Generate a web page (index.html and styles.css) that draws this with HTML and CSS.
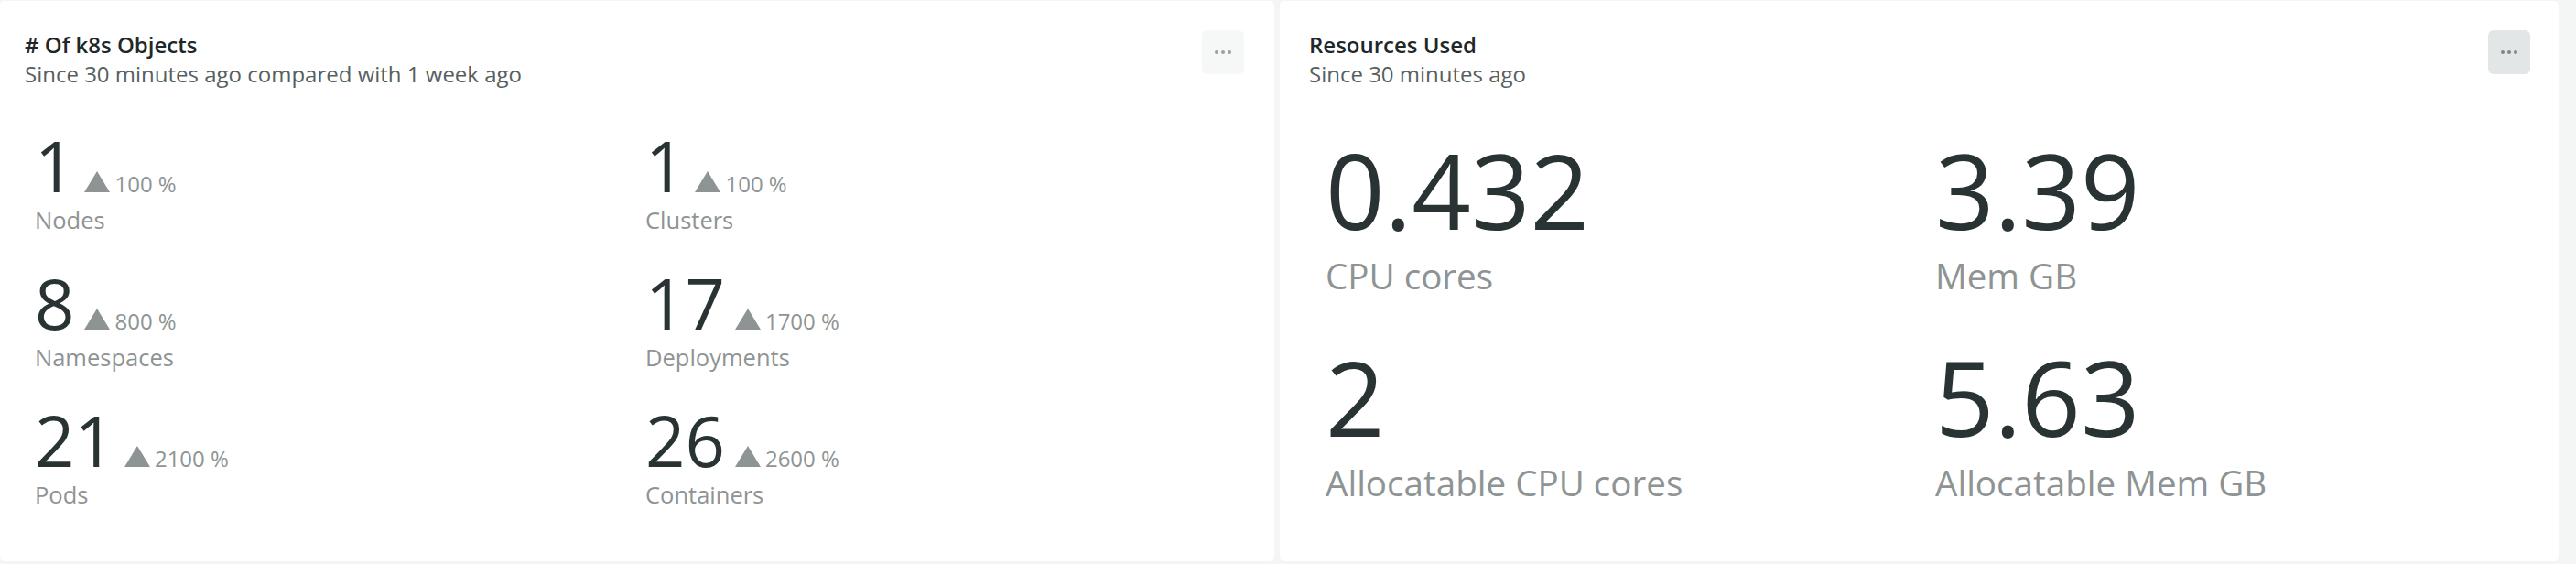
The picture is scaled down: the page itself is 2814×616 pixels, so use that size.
FILE: index.html
```html
<!DOCTYPE html>
<html lang="en">
<head>
<meta charset="utf-8">
<title>Kubernetes overview</title>
<link rel="stylesheet" href="styles.css">
</head>
<body>
<div class="dashboard">
  <section class="card card-objects">
    <header class="card-header">
      <div class="heading">
        <h2 class="title"># Of k8s Objects</h2>
        <p class="subtitle">Since 30 minutes ago compared with 1 week ago</p>
      </div>
      <button class="menu-btn" type="button" aria-label="More">
        <svg width="20" height="6" viewBox="0 0 20 6"><circle cx="3" cy="3" r="2"/><circle cx="10" cy="3" r="2"/><circle cx="17" cy="3" r="2"/></svg>
      </button>
    </header>
    <div class="grid grid-small">
      <div class="stat">
        <div class="value-line"><span class="value">1</span><span class="delta"><svg class="tri" width="28" height="23" viewBox="0 0 28 23"><path d="M14 0L28 23H0Z"/></svg><span class="pct">100 %</span></span></div>
        <div class="label">Nodes</div>
      </div>
      <div class="stat">
        <div class="value-line"><span class="value">1</span><span class="delta"><svg class="tri" width="28" height="23" viewBox="0 0 28 23"><path d="M14 0L28 23H0Z"/></svg><span class="pct">100 %</span></span></div>
        <div class="label">Clusters</div>
      </div>
      <div class="stat">
        <div class="value-line"><span class="value">8</span><span class="delta"><svg class="tri" width="28" height="23" viewBox="0 0 28 23"><path d="M14 0L28 23H0Z"/></svg><span class="pct">800 %</span></span></div>
        <div class="label">Namespaces</div>
      </div>
      <div class="stat">
        <div class="value-line"><span class="value">17</span><span class="delta"><svg class="tri" width="28" height="23" viewBox="0 0 28 23"><path d="M14 0L28 23H0Z"/></svg><span class="pct">1700 %</span></span></div>
        <div class="label">Deployments</div>
      </div>
      <div class="stat">
        <div class="value-line"><span class="value">21</span><span class="delta"><svg class="tri" width="28" height="23" viewBox="0 0 28 23"><path d="M14 0L28 23H0Z"/></svg><span class="pct">2100 %</span></span></div>
        <div class="label">Pods</div>
      </div>
      <div class="stat">
        <div class="value-line"><span class="value">26</span><span class="delta"><svg class="tri" width="28" height="23" viewBox="0 0 28 23"><path d="M14 0L28 23H0Z"/></svg><span class="pct">2600 %</span></span></div>
        <div class="label">Containers</div>
      </div>
    </div>
  </section>
  <section class="card card-resources">
    <header class="card-header">
      <div class="heading">
        <h2 class="title">Resources Used</h2>
        <p class="subtitle">Since 30 minutes ago</p>
      </div>
      <button class="menu-btn menu-btn-active" type="button" aria-label="More">
        <svg width="20" height="6" viewBox="0 0 20 6"><circle cx="3" cy="3" r="2"/><circle cx="10" cy="3" r="2"/><circle cx="17" cy="3" r="2"/></svg>
      </button>
    </header>
    <div class="grid grid-large">
      <div class="stat">
        <div class="value">0.432</div>
        <div class="label">CPU cores</div>
      </div>
      <div class="stat">
        <div class="value">3.39</div>
        <div class="label">Mem GB</div>
      </div>
      <div class="stat">
        <div class="value">2</div>
        <div class="label">Allocatable CPU cores</div>
      </div>
      <div class="stat">
        <div class="value">5.63</div>
        <div class="label">Allocatable Mem GB</div>
      </div>
    </div>
  </section>
</div>
</body>
</html>
```

FILE: styles.css
```css
* {
  box-sizing: border-box;
}

html,
body {
  margin: 0;
  padding: 0;
  background: #f4f5f5;
  font-family: "Open Sans", "Noto Sans", "Liberation Sans", sans-serif;
}

.dashboard {
  display: flex;
  gap: 6px;
  width: 2814px;
  height: 616px;
  padding: 1px 19px 3px 0;
}

.card {
  background: #ffffff;
  border-radius: 5px;
  display: flex;
  flex-direction: column;
}

.card-objects {
  flex: 0 0 1392px;
}

.card-resources {
  flex: 0 0 1397px;
}

.card-header {
  display: flex;
  justify-content: space-between;
  align-items: flex-start;
  padding: 32px 33px 0 27px;
}

.card-resources .card-header {
  padding: 32px 31px 0 32px;
}

.title {
  margin: 0;
  font-size: 24px;
  line-height: 32px;
  font-weight: 600;
  color: #1f2829;
}

.subtitle {
  margin: 0;
  font-size: 24px;
  line-height: 32px;
  font-weight: 400;
  color: #566061;
}

.menu-btn {
  width: 46px;
  height: 48px;
  border: none;
  border-radius: 6px;
  background: #f6f7f7;
  display: flex;
  align-items: center;
  justify-content: center;
  padding: 0;
  fill: #9aa0a0;
}

.menu-btn-active {
  background: #e3e6e6;
  fill: #7f8787;
}

.grid {
  display: grid;
}

.grid-small {
  grid-template-columns: 667px 667px;
  row-gap: 37px;
  padding: 46px 0 0 38px;
}

.grid-large {
  grid-template-columns: 666px 666px;
  row-gap: 52px;
  padding: 52px 0 0 50px;
}

.value-line {
  display: flex;
  align-items: baseline;
}

.grid-small .value {
  font-size: 76px;
  line-height: 76px;
  color: #293333;
}

.delta {
  display: flex;
  align-items: baseline;
  gap: 5px;
  margin-left: 11px;
}

.tri {
  fill: #8e9494;
  display: block;
}

.pct {
  font-size: 24px;
  line-height: 30px;
  color: #8e9494;
}

.grid-small .label {
  margin-top: 5px;
  font-size: 25.5px;
  line-height: 32px;
  color: #8e9494;
}

.grid-large .value {
  font-size: 113px;
  line-height: 116px;
  color: #293333;
}

.grid-large .label {
  margin-top: 14px;
  font-size: 38.6px;
  line-height: 44px;
  color: #8e9494;
}
```
